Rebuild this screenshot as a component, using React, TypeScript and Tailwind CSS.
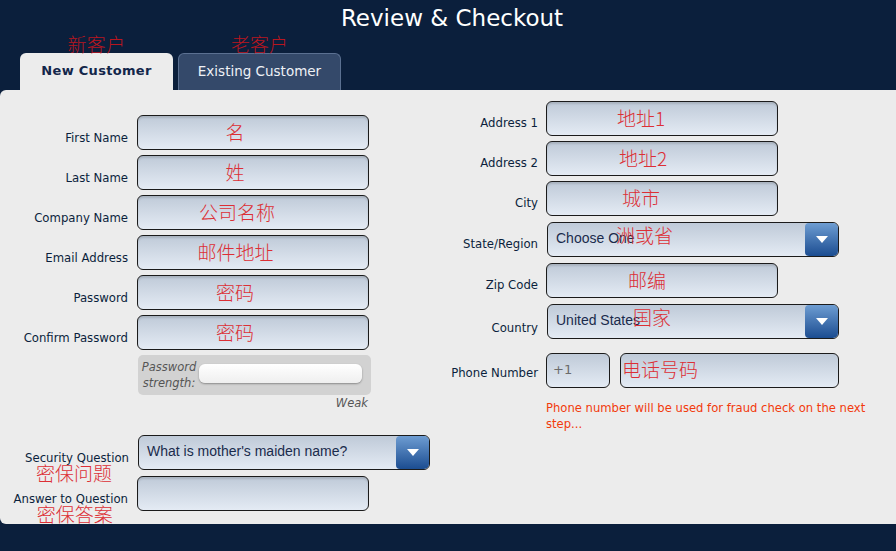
import React from 'react';

const labelFont = { fontFamily: '"DejaVu Sans", Verdana, sans-serif' };
const cjk = { fontFamily: '"Noto Sans CJK SC", "DejaVu Sans", sans-serif' };
const arial = { fontFamily: '"Liberation Sans", Arial, sans-serif' };

function Note({ text, className = '' }: { text: string; className?: string }) {
  return (
    <span className={`text-[19px] leading-[19px] font-light text-[#dc2f35] whitespace-nowrap ${className}`} style={cjk}>
      {text}
    </span>
  );
}

function Field({
  note,
  shift = 'pr-[36px]',
  width = 'w-[232px]',
}: {
  note?: string;
  shift?: string;
  width?: string;
}) {
  return (
    <div
      className={`${width} h-[35px] rounded-[6px] border border-[#1b1b1b] bg-gradient-to-b from-[#bfcad8] to-[#e4ebf4] shadow-[inset_0_2px_2px_rgba(0,0,0,0.12)] flex items-center justify-center pb-[3px]`}
    >
      {note && <Note text={note} className={shift} />}
    </div>
  );
}

function Select({ value, note, noteLeft }: { value: string; note?: string; noteLeft?: string }) {
  return (
    <div className="relative w-[292px] h-[35px] rounded-[6px] border border-[#1b1b1b] bg-gradient-to-b from-[#bfcad8] to-[#e4ebf4] flex items-center">
      <span className="pl-[8px] flex-1 text-[14px] text-[#1a2b4c] pb-[3px]" style={arial}>
        {value}
      </span>
      <div className="w-[33px] h-full rounded-l-[4px] rounded-r-[5px] bg-gradient-to-b from-[#6e9dd2] to-[#1b4d91] flex items-center justify-center">
        <svg width="12" height="7" viewBox="0 0 12 7">
          <path d="M0 0h12L6 7z" fill="#ffffff" />
        </svg>
      </div>
      {note && (
        <div className={`absolute top-[2px] ${noteLeft}`}>
          <Note text={note} />
        </div>
      )}
    </div>
  );
}

function Row({
  label,
  children,
  labelW,
  pt = 'pt-[16px]',
  className = '',
  note,
  noteShift = '-left-[3px]',
}: {
  label: string;
  children: React.ReactNode;
  labelW: string;
  pt?: string;
  className?: string;
  note?: string;
  noteShift?: string;
}) {
  return (
    <div className={`flex items-start ${className}`}>
      <div className={`${labelW} shrink-0 text-right ${pt} text-[11.7px] leading-[14px] text-[#0b1f3c]`} style={labelFont}>
        <span className="relative inline-block whitespace-nowrap">
          {label}
          {note && (
            <span className="absolute left-1/2 -translate-x-1/2 top-[12px]">
              <Note text={note} className={`relative ${noteShift}`} />
            </span>
          )}
        </span>
      </div>
      {children}
    </div>
  );
}

export default function App() {
  return (
    <div className="w-full h-[551px] bg-[#0b1f3c] flex flex-col overflow-hidden" style={labelFont}>
      {/* title */}
      <div className="h-[36px] pl-[8px] text-center text-white text-[23px] leading-[36px]">Review &amp; Checkout</div>

      {/* tabs */}
      <div className="flex items-end gap-[5px] pl-[20px] mt-[17px] h-[37px]">
        <div className="relative w-[153px] h-[37px] rounded-t-[6px] bg-[#ececec] flex items-center justify-center pb-[2px] text-[13px] font-bold tracking-[0.3px] text-[#13264a]">
          <Note text="新客户" className="absolute -top-[19px] left-1/2 -translate-x-1/2 !text-[#b8161f]" />
          New Customer
        </div>
        <div className="relative w-[163px] h-[37px] rounded-t-[6px] bg-[#34496a] border border-b-0 border-[#5b7091] flex items-center justify-center pb-[2px] text-[13.5px] text-[#eef1f6]">
          <Note text="老客户" className="absolute -top-[20px] left-1/2 -translate-x-1/2 !text-[#b8161f]" />
          Existing Customer
        </div>
      </div>

      {/* panel */}
      <div className="h-[434px] bg-[#ececec] rounded-l-[6px] flex">
        {/* left column */}
        <div className="w-[440px] pt-[25px] flex flex-col gap-[5px]">
          <Row label="First Name" labelW="w-[129px] pr-[1px] mr-[8px]">
            <Field note="名" />
          </Row>
          <Row label="Last Name" labelW="w-[129px] pr-[1px] mr-[8px]">
            <Field note="姓" />
          </Row>
          <Row label="Company Name" labelW="w-[129px] pr-[1px] mr-[8px]">
            <Field note="公司名称" shift="pr-[32px]" />
          </Row>
          <Row label="Email Address" labelW="w-[129px] pr-[1px] mr-[8px]">
            <Field note="邮件地址" shift="pr-[35px]" />
          </Row>
          <Row label="Password" labelW="w-[129px] pr-[1px] mr-[8px]">
            <Field note="密码" />
          </Row>
          <Row label="Confirm Password" labelW="w-[129px] pr-[1px] mr-[8px]">
            <Field note="密码" />
          </Row>

          {/* password strength */}
          <div className="ml-[138px] w-[233px]">
            <div className="h-[40px] rounded-[5px] bg-[#d2d2d2] flex items-center pl-[1px] pr-[9px]">
              <div className="w-[60px] text-center text-[11.5px] leading-[16px] italic text-[#555555]">
                Password
                <br />
                strength:
              </div>
              <div className="flex-1 h-[19px] rounded-[6px] bg-gradient-to-b from-[#ffffff] to-[#efefef] shadow-[0_1px_2px_rgba(0,0,0,0.35)] mb-[4px]" />
            </div>
            <div className="text-right pr-[3px] pt-[1px] text-[11.5px] leading-[14px] italic text-[#555555]">Weak</div>
          </div>

          <Row label="Security Question" labelW="w-[130px] pr-[1px] mr-[8px]" className="mt-[20px]" note="密保问题">
            <Select value="What is mother's maiden name?" />
          </Row>
          <Row
            label="Answer to Question"
            labelW="w-[129px] pr-[1px] mr-[8px]"
            className="mt-[1px]"
            note="密保答案"
            noteShift="left-[4px]"
          >
            <Field />
          </Row>
        </div>

        {/* right column */}
        <div className="flex-1 pt-[11px] flex flex-col">
          <Row label="Address 1" labelW="w-[99px] pr-[1px] mr-[7px]" pt="pt-[15px]">
            <Field note="地址1" shift="pr-[42px]" />
          </Row>
          <Row label="Address 2" labelW="w-[99px] pr-[1px] mr-[7px]" pt="pt-[15px]" className="mt-[5px]">
            <Field note="地址2" shift="pr-[38px]" />
          </Row>
          <Row label="City" labelW="w-[99px] pr-[1px] mr-[7px]" pt="pt-[15px]" className="mt-[5px]">
            <Field note="城市" shift="pr-[42px]" />
          </Row>
          <Row label="State/Region" labelW="w-[99px] pr-[1px] mr-[8px]" pt="pt-[15px]" className="mt-[6px]">
            <Select value="Choose One" note="洲或省" noteLeft="left-[68px]" />
          </Row>
          <Row label="Zip Code" labelW="w-[99px] pr-[1px] mr-[7px]" pt="pt-[15px]" className="mt-[6px]">
            <Field note="邮编" shift="pr-[30px]" />
          </Row>
          <Row label="Country" labelW="w-[99px] pr-[1px] mr-[8px]" pt="pt-[17px]" className="mt-[6px]">
            <Select value="United States" note="国家" noteLeft="left-[85px]" />
          </Row>
          <Row label="Phone Number" labelW="w-[99px] pr-[1px] mr-[7px]" pt="pt-[13px]" className="mt-[14px]">
            <div className="flex gap-[10px]">
              <div className="w-[64px] h-[35px] rounded-[6px] border border-[#1b1b1b] bg-gradient-to-b from-[#bfcad8] to-[#e4ebf4] flex items-center pl-[6px] pb-[2px] text-[13px] text-[#6b6b6b]">
                +1
              </div>
              <div className="w-[219px] h-[35px] rounded-[6px] border border-[#1b1b1b] bg-gradient-to-b from-[#bfcad8] to-[#e4ebf4] flex items-center pl-[1px] pb-[4px]">
                <Note text="电话号码" />
              </div>
            </div>
          </Row>
          <div className="ml-[106px] mt-[12px] w-[326px] text-[11.6px] leading-[16px] text-[#f23a0c]">
            Phone number will be used for fraud check on the next step...
          </div>
        </div>
      </div>
    </div>
  );
}
